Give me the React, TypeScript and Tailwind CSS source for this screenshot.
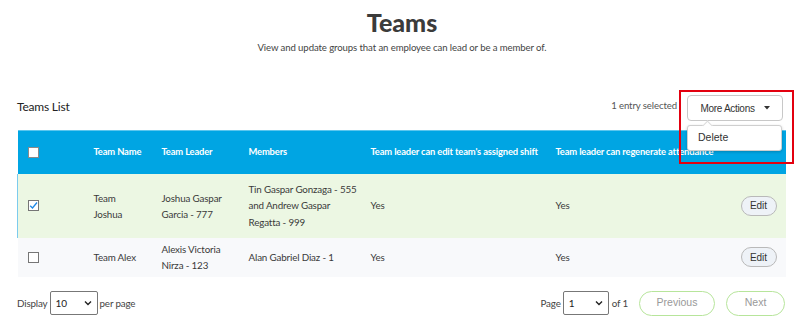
import { useState } from "react";

interface ITeam {
    name: string[],
    leader: string[],
    members: string[],
    canEditShift: string,
    canRegenerate: string,
    selected: boolean
}

/** Rows shown in the teams list */
const teams: ITeam[] = [
    {
        name: ["Team", "Joshua"],
        leader: ["Joshua Gaspar", "Garcia - 777"],
        members: ["Tin Gaspar Gonzaga - 555", "and Andrew Gaspar", "Regatta - 999"],
        canEditShift: "Yes",
        canRegenerate: "Yes",
        selected: true
    },
    {
        name: ["Team Alex"],
        leader: ["Alexis Victoria", "Nirza - 123"],
        members: ["Alan Gabriel Diaz - 1"],
        canEditShift: "Yes",
        canRegenerate: "Yes",
        selected: false
    },
]

const Checkbox = ({ checked, header }: { checked?: boolean, header?: boolean }) => (
    <span className={`flex items-center justify-center w-[11px] h-[11px] border ${header ? "bg-white border-[#8a8a8a]" : "bg-white border-[#767676]"}`}>
        {checked &&
            <svg width="9" height="9" viewBox="0 0 9 9">
                <path d="M1.2 4.8 L3.5 7 L8 1.5" fill="none" stroke="#1e88e5" strokeWidth="1.3" />
            </svg>}
    </span>
)

const Chevron = () => (
    <svg width="8" height="6" viewBox="0 0 8 6">
        <path d="M1 1.5 L4 4.5 L7 1.5" fill="none" stroke="#222" strokeWidth="1.4" />
    </svg>
)

const FakeSelect = ({ value, width }: { value: string, width: string }) => (
    <div className={`flex items-center justify-between h-[24px] ${width} border border-[#777] rounded-[2px] bg-white pl-[5px] pr-[5px] text-[10px] text-[#222]`}>
        <span>{value}</span>
        <Chevron />
    </div>
)

export default function App() {
    const [rows] = useState(teams);
    const sans = { fontFamily: "Lato, 'Noto Sans', sans-serif" };
    const arial = { fontFamily: "'Liberation Sans', Arial, sans-serif" };

    return (
        <div className="relative w-[804px] h-[331px] bg-white overflow-hidden" style={sans}>
            {/* Page heading */}
            <div className="flex flex-col items-center pt-[7px]">
                <h1 className="text-[25px] leading-[30px] font-black text-[#3b3b3b]">Teams</h1>
                <p className="mt-[5px] text-[9.6px] leading-[12px] text-[#444] tracking-[-0.1px]">View and update groups that an employee can lead or be a member of.</p>
            </div>

            <div className="pl-[17px] pr-[19px]">
                {/* Toolbar */}
                <div className="flex items-center justify-between mt-[41px] h-[26px]">
                    <span className="text-[12px] text-[#222] tracking-[-0.2px] -mt-[2px]">Teams List</span>
                    <div className="flex items-center gap-[10px] mr-[2px]">
                        <span className="text-[9.6px] text-[#555] -mt-[4px] tracking-[-0.1px]">1 entry selected</span>
                        <div className="flex items-center justify-center gap-[9px] w-[96px] h-[26px] border border-[#c8c8c8] rounded-[4px] bg-white text-[10px] tracking-[-0.3px] text-[#333]" style={arial}>
                            <span>More Actions</span>
                            <svg width="6" height="4" viewBox="0 0 6 4"><path d="M0 0 H6 L3 3.5 Z" fill="#333" /></svg>
                        </div>
                    </div>
                </div>

                {/* Table */}
                <table className="mt-[9px] w-[768px] table-fixed border-collapse text-[9.8px] tracking-[-0.15px] text-[#3a3a3a]">
                    <colgroup>
                        <col className="w-[66px]" />
                        <col className="w-[68px]" />
                        <col className="w-[87px]" />
                        <col className="w-[122px]" />
                        <col className="w-[185px]" />
                        <col className="w-[155px]" />
                        <col className="w-[85px]" />
                    </colgroup>
                    <thead>
                        <tr className="h-[43px] bg-[#00a5e3] border-t border-[#5cc6ee] text-white text-[9.4px] tracking-[-0.15px] font-bold text-left">
                            <th className="pl-[10px]"><Checkbox header /></th>
                            <th className="pl-[10px] whitespace-nowrap">Team Name</th>
                            <th className="pl-[10px] whitespace-nowrap">Team Leader</th>
                            <th className="pl-[10px] whitespace-nowrap">Members</th>
                            <th className="pl-[10px] whitespace-nowrap">Team leader can edit team's assigned shift</th>
                            <th className="pl-[10px] whitespace-nowrap overflow-visible">Team leader can regenerate attendance</th>
                            <th></th>
                        </tr>
                    </thead>
                    <tbody>
                        {rows.map((team, i) => (
                            <tr key={i} className={team.selected ? "h-[64px] bg-[#ecf7e3] border-l border-[#7ccbee]" : "h-[39px] bg-[#f8f9fb]"}>
                                <td className="pl-[10px]"><Checkbox checked={team.selected} /></td>
                                <td className="pl-[10px] leading-[16px]">{team.name.map(l => <div key={l}>{l}</div>)}</td>
                                <td className="pl-[10px] leading-[16px]">{team.leader.map(l => <div key={l}>{l}</div>)}</td>
                                <td className="pl-[10px] leading-[16.5px] whitespace-nowrap">{team.members.map(l => <div key={l}>{l}</div>)}</td>
                                <td className="pl-[10px]">{team.canEditShift}</td>
                                <td className="pl-[10px]">{team.canRegenerate}</td>
                                <td className="pr-[9px]">
                                    <div className="flex justify-end">
                                        <span className="flex items-center justify-center w-[36px] h-[20px] rounded-full border border-[#b9b9b9] bg-[#eef2f7] text-[10px] tracking-normal text-[#333]" style={arial}>Edit</span>
                                    </div>
                                </td>
                            </tr>
                        ))}
                    </tbody>
                </table>

                {/* Footer */}
                <div className="flex items-center justify-between mt-[14px] text-[9.8px] tracking-[-0.15px] text-[#444]">
                    <div className="flex items-center gap-[2px]">
                        <span>Display</span>
                        <FakeSelect value="10" width="w-[48px]" />
                        <span>per page</span>
                    </div>
                    <div className="flex items-center">
                        <span className="mr-[2px]">Page</span>
                        <FakeSelect value="1" width="w-[46px]" />
                        <span className="ml-[3px]">of 1</span>
                        <span className="ml-[11px] flex items-center justify-center w-[76px] h-[25px] rounded-full border border-[#b7e59b] text-[10.5px] tracking-normal text-[#999]" style={arial}>Previous</span>
                        <span className="ml-[11px] flex items-center justify-center w-[59px] h-[25px] rounded-full border border-[#b7e59b] text-[10.5px] tracking-normal text-[#999]" style={arial}>Next</span>
                    </div>
                </div>
            </div>

            {/* Open dropdown menu */}
            <div className="absolute left-[687px] top-[125px] w-[95px] h-[26px] bg-white border border-[#cfcfcf] rounded-[3px] shadow-[0_1px_3px_rgba(0,0,0,0.2)] flex items-center pl-[10px] text-[10.5px] text-[#333]" style={arial}>
                <span className="absolute -top-[4px] left-[16px] w-[7px] h-[7px] bg-white border-l border-t border-[#dcdcdc] rotate-45" />
                Delete
            </div>

            {/* Highlight box */}
            <div className="absolute left-[679px] top-[90px] w-[115px] h-[74px] border-2 border-[#e3000f]" />
        </div>
    );
}
